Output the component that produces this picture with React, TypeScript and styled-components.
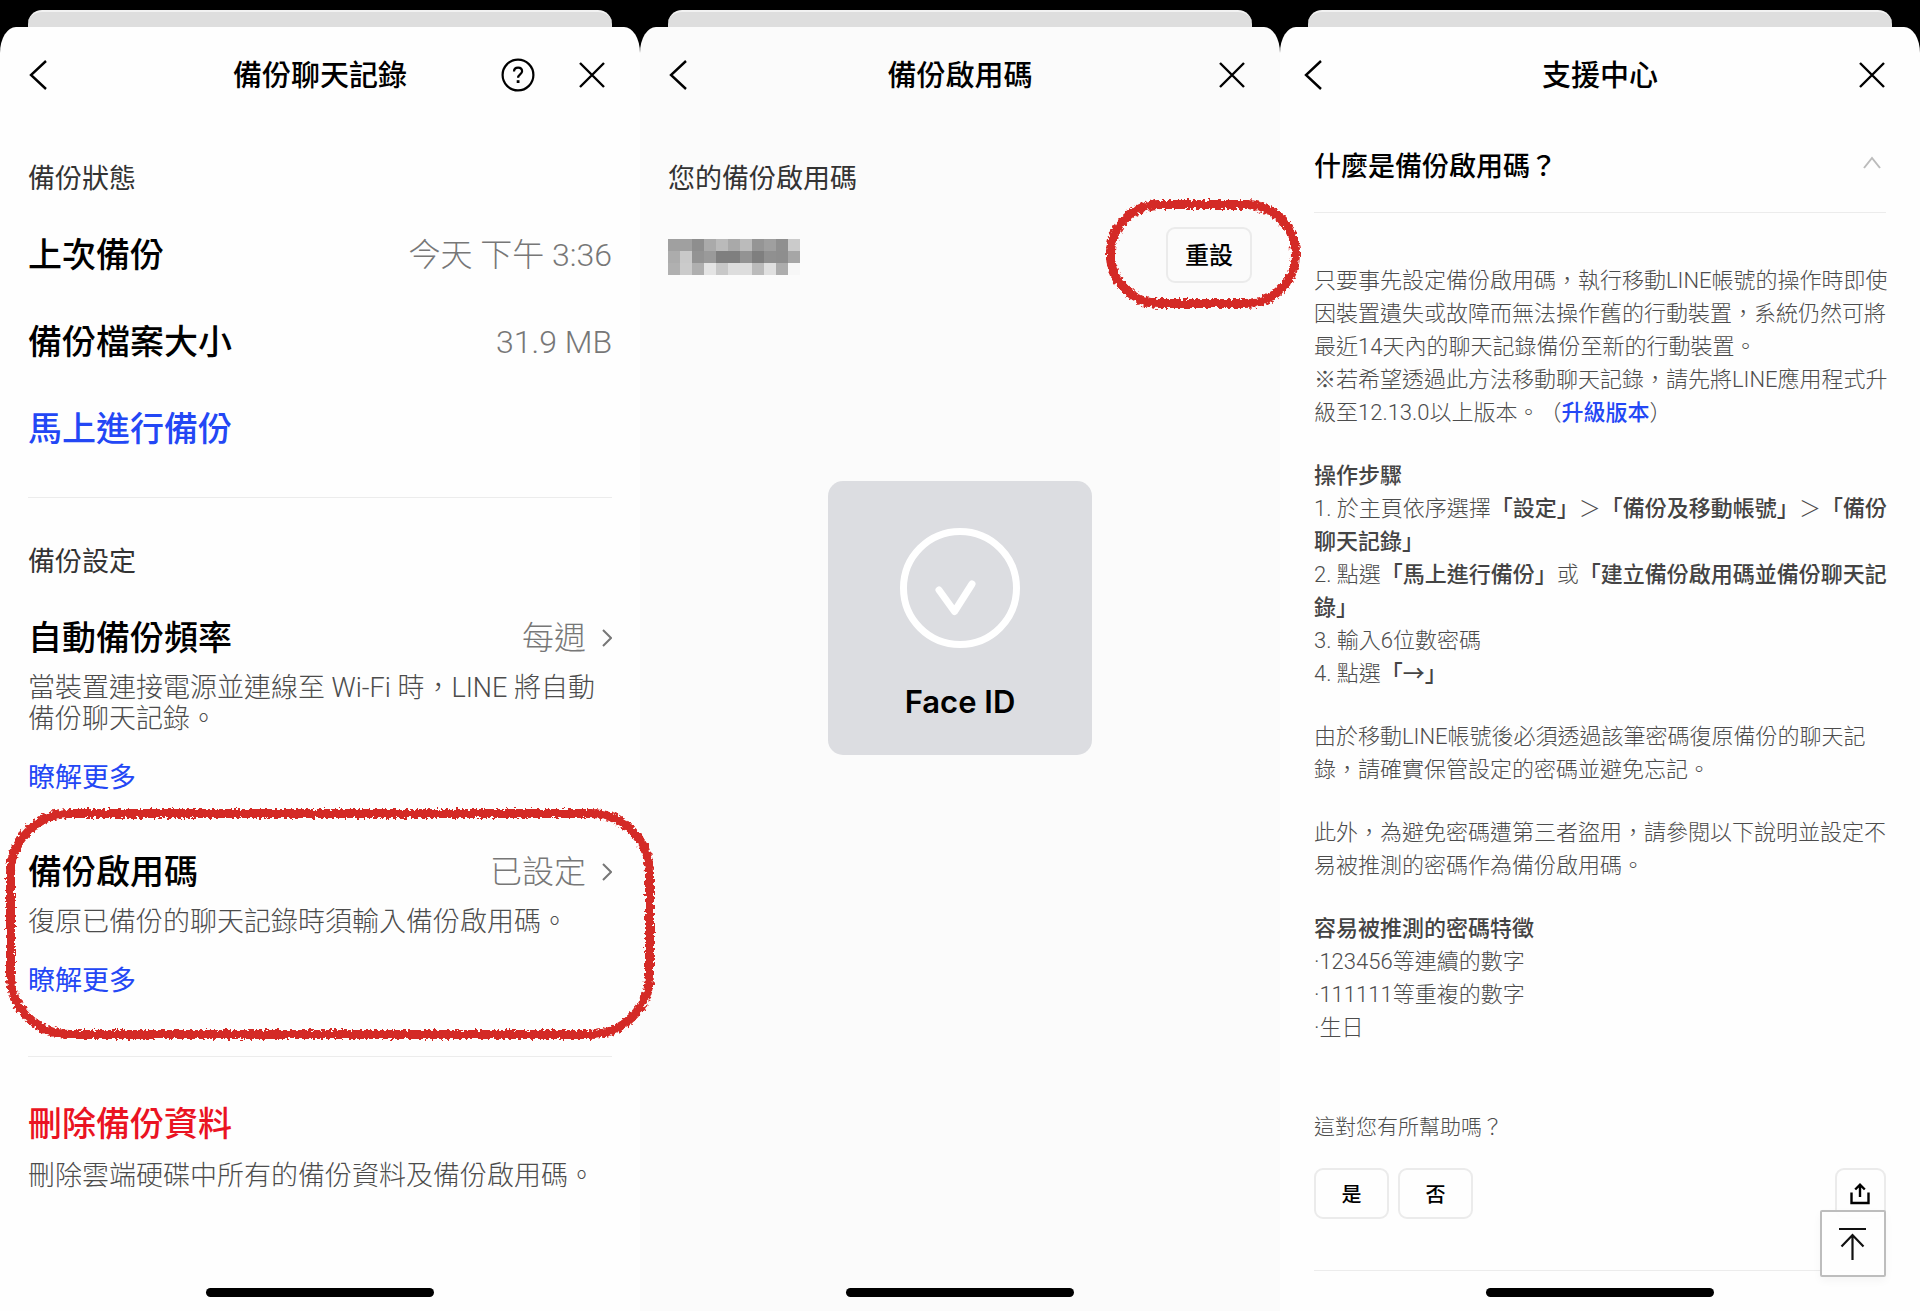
import React from "react";
import styled, { createGlobalStyle } from "styled-components";

const GlobalStyle = createGlobalStyle`
  *, *::before, *::after { box-sizing: border-box; }
  html, body { margin: 0; padding: 0; background: #000; }
  body {
    font-family: Roboto, "Noto Sans CJK TC", sans-serif;
    color: #111;
    overflow: hidden;
  }
  h1, h2, h3, p, ul, ol { margin: 0; padding: 0; font-weight: inherit; }
  ol, ul { list-style: none; }
  button { font: inherit; color: inherit; background: none; border: 0; padding: 0; cursor: pointer; }
  a { color: inherit; text-decoration: none; }
  svg { display: block; }
`;

const BLUE = "#2347f5";
const RED = "#ea1322";

const Screens = styled.div`
  display: grid;
  grid-template-columns: repeat(3, minmax(0, 1fr));
  height: 100vh;
`;

const Phone = styled.section<{ $clip?: boolean }>`
  position: relative;
  display: flex;
  flex-direction: column;
  min-height: 0;
  padding-top: 10px;
  background: #000;
  overflow: ${(p) => (p.$clip ? "hidden" : "visible")};
`;

const PeekSheet = styled.div`
  flex: none;
  height: 17px;
  margin: 0 28px;
  border-top: 2px solid #f2f2f2;
  border-radius: 14px 14px 0 0;
  background: #dedede;
`;

const Sheet = styled.div<{ $tone?: string }>`
  flex: 1;
  min-height: 0;
  border-radius: 16px 16px 0 0 / 26px 26px 0 0;
  background: ${(p) => p.$tone ?? "#fefefe"};
`;

const Header = styled.header<{ $inset?: number }>`
  display: grid;
  grid-template-columns: 1fr auto 1fr;
  align-items: center;
  height: 96px;
  padding: 0 ${(p) => p.$inset ?? 28}px;
`;

const Title = styled.h1`
  padding-top: 2px;
  font-size: 29px;
  line-height: 40px;
  font-weight: 500;
  color: #000;
`;

const Actions = styled.div<{ $end?: number }>`
  display: flex;
  justify-content: flex-end;
  align-items: center;
  gap: 44px;
  padding-right: ${(p) => p.$end ?? 7}px;
`;

const IconButton = styled.button`
  display: flex;
  align-items: center;
  color: #000;
`;

const Content = styled.div<{ $side?: number; $top?: number }>`
  padding: ${(p) => p.$top ?? 37}px ${(p) => p.$side ?? 28}px 0;
`;

const SectionLabel = styled.h2`
  font-size: 27px;
  line-height: 38px;
  color: #333;
`;

const StatusList = styled.div`
  margin-top: 13px;
`;

const StatusRow = styled.div`
  display: flex;
  align-items: center;
  justify-content: space-between;
  height: 87px;
`;

const ItemTitle = styled.h3<{ $color?: string }>`
  font-size: 34px;
  line-height: 44px;
  font-weight: 500;
  color: ${(p) => p.$color ?? "#000"};
`;

const Value = styled.span`
  display: flex;
  align-items: center;
  gap: 16px;
  font-size: 32px;
  line-height: 44px;
  font-weight: 300;
  color: #777;
`;

const Divider = styled.hr<{ $before: number }>`
  height: 1px;
  margin: ${(p) => p.$before}px 0 45px;
  border: 0;
  background: #ececec;
`;

const Item = styled.div<{ $before?: number }>`
  position: relative;
  margin-top: ${(p) => p.$before ?? 0}px;
`;

const ItemHead = styled.button`
  display: flex;
  align-items: center;
  justify-content: space-between;
  width: 100%;
  text-align: left;
`;

const Description = styled.p<{ $gap?: number }>`
  margin-top: ${(p) => p.$gap ?? 13}px;
  font-size: 27px;
  line-height: 31px;
  font-weight: 300;
  color: #4c4c4c;
`;

const MoreLink = styled.a`
  display: block;
  width: fit-content;
  margin-top: 24px;
  font-size: 27px;
  line-height: 38px;
  color: ${BLUE};
`;

const Ring = styled.div<{ $top: number; $right: number; $bottom: number; $left: number; $radius: string }>`
  position: absolute;
  z-index: 2;
  top: ${(p) => -p.$top}px;
  right: ${(p) => -p.$right}px;
  bottom: ${(p) => -p.$bottom}px;
  left: ${(p) => -p.$left}px;
  border: 9px solid #d42a25;
  border-radius: ${(p) => p.$radius};
  filter: url(#crayon);
  pointer-events: none;
`;

const HomeBar = styled.div`
  position: absolute;
  z-index: 1;
  bottom: 14px;
  left: 50%;
  width: 228px;
  height: 9px;
  margin-left: -114px;
  border-radius: 5px;
  background: #000;
`;

const CodeRow = styled.div`
  display: flex;
  align-items: center;
  justify-content: space-between;
  margin-top: 29px;
`;

const CodeValue = styled.div`
  padding-top: 4px;
`;

const ResetWrap = styled.div`
  position: relative;
`;

const OutlineButton = styled.button<{ $w: number; $h: number; $size: number }>`
  display: flex;
  align-items: center;
  justify-content: center;
  width: ${(p) => p.$w}px;
  height: ${(p) => p.$h}px;
  border: 2px solid #ebebeb;
  border-radius: 9px;
  font-size: ${(p) => p.$size}px;
  font-weight: 500;
  color: #000;
`;

const ResetButton = styled(OutlineButton)`
  padding-bottom: 4px;
`;

const FaceCard = styled.div`
  display: flex;
  flex-direction: column;
  align-items: center;
  width: 264px;
  height: 274px;
  margin: 198px auto 0;
  padding-top: 47px;
  border-radius: 15px;
  background: #dcdde1;
`;

const FaceLabel = styled.p`
  margin-top: 34px;
  font-family: Inter, sans-serif;
  font-size: 31px;
  line-height: 40px;
  font-weight: 600;
  color: #000;
`;

const Question = styled.button`
  display: flex;
  align-items: center;
  justify-content: space-between;
  width: 100%;
  padding: 26px 5px 27px 0;
  font-size: 27px;
  line-height: 36px;
  font-weight: 500;
  color: #000;
  text-align: left;
`;

const Answer = styled.div`
  display: flex;
  flex-direction: column;
  gap: 30px;
  padding-top: 51px;
  border-top: 1px solid #ececec;
  font-size: 22px;
  line-height: 33px;
  font-weight: 300;
  color: #4c4c4c;
  white-space: nowrap;
  text-spacing-trim: space-all;

  strong { font-weight: 500; color: #444; }
  a { font-weight: 500; color: ${BLUE}; }
`;

const Helpful = styled.p`
  margin-top: 67px;
  font-size: 21px;
  line-height: 32px;
  font-weight: 300;
  color: #4c4c4c;
`;

const VoteRow = styled.div`
  display: flex;
  gap: 9px;
  margin: 25px 0 51px;
`;

const Spacer = styled.span`
  flex: 1;
`;

const NextQuestion = styled.div`
  border-top: 1px solid #ececec;
`;

const TopButton = styled.button`
  position: absolute;
  z-index: 1;
  right: 34px;
  bottom: 34px;
  display: flex;
  align-items: center;
  justify-content: center;
  width: 66px;
  height: 67px;
  border: 2px solid #bdbdbd;
  border-radius: 2px;
  background: rgba(254, 254, 254, 0.92);
  box-shadow: 0 4px 8px rgba(0, 0, 0, 0.04);
`;

const BackIcon = () => (
  <svg width="19" height="30" viewBox="0 0 19 30" fill="none" stroke="currentColor" strokeWidth="2.4">
    <path d="M18 1 3 15l15 14" />
  </svg>
);

const CloseIcon = () => (
  <svg width="26" height="26" viewBox="0 0 26 26" fill="none" stroke="currentColor" strokeWidth="2.4">
    <path d="M1 1l24 24M25 1 1 25" />
  </svg>
);

const HelpIcon = () => (
  <svg width="34" height="34" viewBox="0 0 34 34" fill="none" stroke="currentColor" strokeWidth="2.2">
    <circle cx="17" cy="17" r="15.4" />
    <path d="M13 13.600c0-2.600 1.700-4 4.100-4s4 1.400 4 3.700c0 3.100-4 3.200-4 6.500" />
    <path d="M17.100 22.200v2.800" strokeWidth="2.8" />
  </svg>
);

const NextIcon = () => (
  <svg width="10" height="18" viewBox="0 0 10 18" fill="none" stroke="#777" strokeWidth="2">
    <path d="M1 1l8 8-8 8" />
  </svg>
);

const CollapseIcon = () => (
  <svg width="18" height="22" viewBox="0 0 18 22" fill="none" stroke="#bcbcbc" strokeWidth="2">
    <path d="M1 12 9 2l8 10" />
  </svg>
);

const CheckIcon = () => (
  <svg width="120" height="120" viewBox="0 0 120 120" fill="none" stroke="#fff" strokeWidth="7">
    <circle cx="60" cy="60" r="56.5" />
    <path d="M39 62l15.500 21.500L72 56" strokeLinecap="round" strokeLinejoin="round" />
  </svg>
);

const ShareIcon = () => (
  <svg width="22" height="22" viewBox="0 0 22 22" fill="none" stroke="currentColor" strokeWidth="2.4">
    <path d="M1.500 9.500v10.500h17V9.500M10 14V2M5.200 6.500 10 1.700l4.800 4.800" />
  </svg>
);

const ToTopIcon = () => (
  <svg width="28" height="34" viewBox="0 0 28 34" fill="none" stroke="#111" strokeWidth="2.2">
    <path d="M0 2h27M13.500 33V9M2.500 19.500l11-11.500 11 11.500" />
  </svg>
);

const MOSAIC = [
  ["a0", "a0", "8e", "aa", "ba", "a9", "bb", "95", "9f", "8f", "cb"],
  ["ac", "c9", "93", "9a", "7f", "7f", "93", "7f", "90", "8e", "a6"],
  ["b0", "cb", "af", "e4", "c8", "dd", "dd", "bb", "e0", "ad", "f7"],
];

const HiddenCode = () => (
  <svg width="132" height="36" viewBox="0 0 132 36" shapeRendering="crispEdges" role="img" aria-label="••••••">
    {MOSAIC.map((row, y) =>
      row.map((v, x) => (
        <rect key={`${x}-${y}`} x={x * 12} y={y * 12} width="12" height="12" fill={`#${v}${v}${v}`} />
      )),
    )}
  </svg>
);

const FilterDefs = styled.svg`
  position: absolute;
`;

const CrayonFilter = () => (
  <FilterDefs width="0" height="0" aria-hidden="true">
    <filter id="crayon" x="-5%" y="-10%" width="110%" height="120%">
      <feTurbulence type="fractalNoise" baseFrequency="0.32" numOctaves="2" seed="4" result="noise" />
      <feDisplacementMap in="SourceGraphic" in2="noise" scale="7" xChannelSelector="R" yChannelSelector="G" />
    </filter>
  </FilterDefs>
);

function BackupScreen() {
  return (
    <Phone>
      <PeekSheet />
      <Sheet>
        <Header>
          <IconButton aria-label="返回"><BackIcon /></IconButton>
          <Title>備份聊天記錄</Title>
          <Actions>
            <IconButton aria-label="說明"><HelpIcon /></IconButton>
            <IconButton aria-label="關閉"><CloseIcon /></IconButton>
          </Actions>
        </Header>
        <Content>
          <SectionLabel>備份狀態</SectionLabel>
          <StatusList>
            <StatusRow>
              <ItemTitle>上次備份</ItemTitle>
              <Value>今天 下午 3:36</Value>
            </StatusRow>
            <StatusRow>
              <ItemTitle>備份檔案大小</ItemTitle>
              <Value>31.9 MB</Value>
            </StatusRow>
            <StatusRow>
              <button><ItemTitle as="span" $color={BLUE}>馬上進行備份</ItemTitle></button>
            </StatusRow>
          </StatusList>
          <Divider $before={25} />
          <SectionLabel>備份設定</SectionLabel>
          <Item $before={35}>
            <ItemHead>
              <ItemTitle as="span">自動備份頻率</ItemTitle>
              <Value>每週<NextIcon /></Value>
            </ItemHead>
            <Description>當裝置連接電源並連線至 Wi-Fi 時，LINE 將自動<br />備份聊天記錄。</Description>
            <MoreLink href="#frequency">瞭解更多</MoreLink>
          </Item>
          <Item $before={53}>
            <ItemHead>
              <ItemTitle as="span">備份啟用碼</ItemTitle>
              <Value>已設定<NextIcon /></Value>
            </ItemHead>
            <Description>復原已備份的聊天記錄時須輸入備份啟用碼。</Description>
            <MoreLink href="#code">瞭解更多</MoreLink>
            <Ring $top={41} $right={42} $bottom={39} $left={22} $radius="64px" />
          </Item>
          <Divider $before={56} />
          <Item>
            <ItemHead>
              <ItemTitle as="span" $color={RED}>刪除備份資料</ItemTitle>
            </ItemHead>
            <Description $gap={15}>刪除雲端硬碟中所有的備份資料及備份啟用碼。</Description>
          </Item>
        </Content>
      </Sheet>
      <HomeBar />
    </Phone>
  );
}

function CodeScreen() {
  return (
    <Phone>
      <PeekSheet />
      <Sheet $tone="#fbfbfb">
        <Header>
          <IconButton aria-label="返回"><BackIcon /></IconButton>
          <Title>備份啟用碼</Title>
          <Actions>
            <IconButton aria-label="關閉"><CloseIcon /></IconButton>
          </Actions>
        </Header>
        <Content>
          <SectionLabel>您的備份啟用碼</SectionLabel>
          <CodeRow>
            <CodeValue><HiddenCode /></CodeValue>
            <ResetWrap>
              <ResetButton $w={86} $h={56} $size={24}>重設</ResetButton>
              <Ring $top={27} $right={48} $bottom={25} $left={60} $radius="56px" />
            </ResetWrap>
          </CodeRow>
          <FaceCard>
            <CheckIcon />
            <FaceLabel>Face ID</FaceLabel>
          </FaceCard>
        </Content>
      </Sheet>
      <HomeBar />
    </Phone>
  );
}

function SupportScreen() {
  return (
    <Phone $clip>
      <PeekSheet />
      <Sheet>
        <Header $inset={23}>
          <IconButton aria-label="返回"><BackIcon /></IconButton>
          <Title>支援中心</Title>
          <Actions $end={12}>
            <IconButton aria-label="關閉"><CloseIcon /></IconButton>
          </Actions>
        </Header>
        <Content $side={34} $top={0}>
          <Question aria-expanded="true">什麼是備份啟用碼？<CollapseIcon /></Question>
          <Answer>
            <p>
              只要事先設定備份啟用碼，執行移動LINE帳號的操作時即使<br />
              因裝置遺失或故障而無法操作舊的行動裝置，系統仍然可將<br />
              最近14天內的聊天記錄備份至新的行動裝置。<br />
              ※若希望透過此方法移動聊天記錄，請先將LINE應用程式升<br />
              級至12.13.0以上版本。（<a href="#upgrade">升級版本</a>）
            </p>
            <div>
              <p><strong>操作步驟</strong></p>
              <p>
                1. 於主頁依序選擇<strong>「設定」</strong>＞<strong>「備份及移動帳號」</strong>＞<strong>「備份<br />聊天記錄」</strong>
              </p>
              <p>
                2. 點選<strong>「馬上進行備份」</strong>或<strong>「建立備份啟用碼並備份聊天記<br />錄」</strong>
              </p>
              <p>3. 輸入6位數密碼</p>
              <p>4. 點選<strong>「→」</strong></p>
            </div>
            <p>
              由於移動LINE帳號後必須透過該筆密碼復原備份的聊天記<br />
              錄，請確實保管設定的密碼並避免忘記。
            </p>
            <p>
              此外，為避免密碼遭第三者盜用，請參閱以下說明並設定不<br />
              易被推測的密碼作為備份啟用碼。
            </p>
            <div>
              <p><strong>容易被推測的密碼特徵</strong></p>
              <ul>
                <li>·123456等連續的數字</li>
                <li>·111111等重複的數字</li>
                <li>·生日</li>
              </ul>
            </div>
          </Answer>
          <Helpful>這對您有所幫助嗎？</Helpful>
          <VoteRow>
            <OutlineButton $w={75} $h={51} $size={20}>是</OutlineButton>
            <OutlineButton $w={75} $h={51} $size={20}>否</OutlineButton>
            <Spacer />
            <OutlineButton $w={51} $h={51} $size={20} aria-label="分享"><ShareIcon /></OutlineButton>
          </VoteRow>
          <NextQuestion />
        </Content>
      </Sheet>
      <TopButton aria-label="回到頂端"><ToTopIcon /></TopButton>
      <HomeBar />
    </Phone>
  );
}

export default function App() {
  return (
    <>
      <GlobalStyle />
      <CrayonFilter />
      <Screens>
        <BackupScreen />
        <CodeScreen />
        <SupportScreen />
      </Screens>
    </>
  );
}
